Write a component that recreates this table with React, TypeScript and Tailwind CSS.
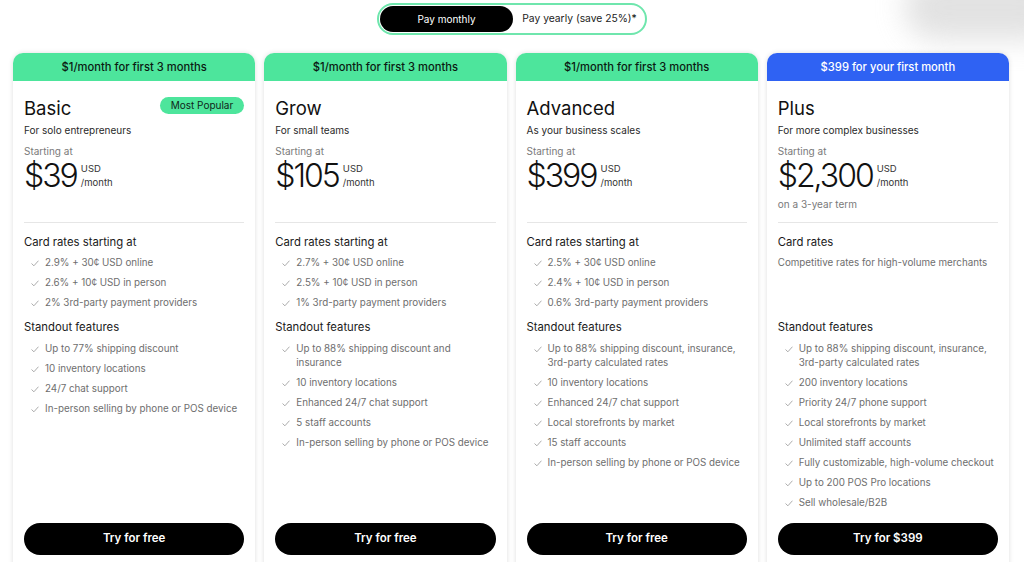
import React from "react";

type Plan = {
  banner: string;
  bannerClass: string;
  name: string;
  tagline: string;
  price: string;
  term?: string;
  popular?: boolean;
  ratesTitle: string;
  rates: string[];
  ratesPlain?: boolean;
  features: string[];
  cta: string;
};

const plans: Plan[] = [
  {
    banner: "$1/month for first 3 months",
    bannerClass: "bg-[#4de59c] text-[#0b1a12]",
    name: "Basic",
    tagline: "For solo entrepreneurs",
    price: "$39",
    popular: true,
    ratesTitle: "Card rates starting at",
    rates: ["2.9% + 30¢ USD online", "2.6% + 10¢ USD in person", "2% 3rd-party payment providers"],
    features: [
      "Up to 77% shipping discount",
      "10 inventory locations",
      "24/7 chat support",
      "In-person selling by phone or POS device",
    ],
    cta: "Try for free",
  },
  {
    banner: "$1/month for first 3 months",
    bannerClass: "bg-[#4de59c] text-[#0b1a12]",
    name: "Grow",
    tagline: "For small teams",
    price: "$105",
    ratesTitle: "Card rates starting at",
    rates: ["2.7% + 30¢ USD online", "2.5% + 10¢ USD in person", "1% 3rd-party payment providers"],
    features: [
      "Up to 88% shipping discount and insurance",
      "10 inventory locations",
      "Enhanced 24/7 chat support",
      "5 staff accounts",
      "In-person selling by phone or POS device",
    ],
    cta: "Try for free",
  },
  {
    banner: "$1/month for first 3 months",
    bannerClass: "bg-[#4de59c] text-[#0b1a12]",
    name: "Advanced",
    tagline: "As your business scales",
    price: "$399",
    ratesTitle: "Card rates starting at",
    rates: ["2.5% + 30¢ USD online", "2.4% + 10¢ USD in person", "0.6% 3rd-party payment providers"],
    features: [
      "Up to 88% shipping discount, insurance, 3rd-party calculated rates",
      "10 inventory locations",
      "Enhanced 24/7 chat support",
      "Local storefronts by market",
      "15 staff accounts",
      "In-person selling by phone or POS device",
    ],
    cta: "Try for free",
  },
  {
    banner: "$399 for your first month",
    bannerClass: "bg-[#2f62f3] text-white",
    name: "Plus",
    tagline: "For more complex businesses",
    price: "$2,300",
    term: "on a 3-year term",
    ratesTitle: "Card rates",
    rates: ["Competitive rates for high-volume merchants"],
    ratesPlain: true,
    features: [
      "Up to 88% shipping discount, insurance, 3rd-party calculated rates",
      "200 inventory locations",
      "Priority 24/7 phone support",
      "Local storefronts by market",
      "Unlimited staff accounts",
      "Fully customizable, high-volume checkout",
      "Up to 200 POS Pro locations",
      "Sell wholesale/B2B",
    ],
    cta: "Try for $399",
  },
];

function Check() {
  return (
    <svg width="8" height="7" viewBox="0 0 8 7" fill="none" className="shrink-0 mt-[4px]">
      <path d="M0.8 3.8 L2.9 5.8 L7.2 1" stroke="#a3a3a3" strokeWidth="0.9" strokeLinecap="round" strokeLinejoin="round" />
    </svg>
  );
}

function Item({ text }: { text: string }) {
  return (
    <li className="flex items-start gap-[6px] pl-[7px] py-[3px] text-[9.8px] leading-[14px] text-[#6e6e6e]">
      <Check />
      <span>{text}</span>
    </li>
  );
}

function Card({ p }: { p: Plan }) {
  return (
    <div className="flex flex-col h-[520px] rounded-t-[10px] bg-white shadow-[0_0_5px_rgba(0,0,0,0.13)] overflow-hidden">
      <div className={`shrink-0 h-[28px] pt-[1px] flex items-center justify-center text-[11.2px] font-medium ${p.bannerClass}`}>
        {p.banner}
      </div>
      <div className="flex flex-col flex-1 px-[11px]">
        <div className="shrink-0 h-[141px] flex flex-col pt-[15px]">
          <div className="flex items-start justify-between">
            <div className="text-[18.5px] leading-[24px] text-[#111]">{p.name}</div>
            {p.popular && (
              <div className="mt-[1px] h-[17px] px-[11px] rounded-full bg-[#4de59c] text-[10px] leading-[17px] text-[#10261a]">
                Most Popular
              </div>
            )}
          </div>
          <div className="mt-[3px] text-[10px] leading-[14px] text-[#2a2a2a]">{p.tagline}</div>
          <div className="mt-[7px] text-[10px] leading-[14px] text-[#7a7a7a]">Starting at</div>
          <div className="flex items-center">
            <div className="text-[32px] leading-[36px] font-light text-[#111] tracking-[-2px]">{p.price}</div>
            <div className="ml-[4px] flex flex-col text-[9.5px] leading-[14px] text-[#333]">
              <span>USD</span>
              <span>/month</span>
            </div>
          </div>
          {p.term && <div className="mt-[3px] text-[10px] leading-[14px] text-[#7a7a7a]">{p.term}</div>}
        </div>
        <div className="shrink-0 h-px bg-[#e6e6e6]" />
        <div className="shrink-0 h-[85px] mt-[11px]">
          <div className="text-[11.3px] leading-[16px] text-[#1a1a1a]">{p.ratesTitle}</div>
          {p.ratesPlain ? (
            <div className="mt-[3px] py-[3px] text-[9.8px] leading-[14px] text-[#6e6e6e]">{p.rates[0]}</div>
          ) : (
            <ul className="mt-[3px]">
              {p.rates.map((r) => (
                <Item key={r} text={r} />
              ))}
            </ul>
          )}
        </div>
        <div className="shrink-0 text-[11.3px] leading-[16px] text-[#1a1a1a]">Standout features</div>
        <ul className="shrink-0 mt-[4px]">
          {p.features.map((f) => (
            <Item key={f} text={f} />
          ))}
        </ul>
        <button className="shrink-0 mt-auto mb-[18px] h-[32px] w-full rounded-full bg-black text-white text-[11.5px] font-semibold">
          {p.cta}
        </button>
      </div>
    </div>
  );
}

export default function App() {
  return (
    <div
      className="relative h-[562px] w-[1024px] overflow-hidden bg-white"
      style={{ fontFamily: "Inter, 'Noto Sans', sans-serif" }}
    >
      <div className="absolute right-[-40px] top-[-25px] h-[65px] w-[160px] rounded-full bg-[#d6d6d6] blur-[14px] opacity-70" />
      <div className="relative flex justify-center pt-[3px]">
        <div className="flex items-center h-[32px] w-[270px] rounded-full border-2 border-[#6fe6ad] bg-white px-[1px]">
          <div className="h-[26px] w-[133px] rounded-full bg-black text-white text-[10px] flex items-center justify-center">
            Pay monthly
          </div>
          <div className="flex-1 text-center text-[10.3px] text-[#222] pl-[2px]">Pay yearly (save 25%)*</div>
        </div>
      </div>
      <div className="relative grid grid-cols-4 gap-[9px] pl-[13px] pr-[15px] mt-[18px]">
        {plans.map((p) => (
          <Card key={p.name} p={p} />
        ))}
      </div>
    </div>
  );
}
